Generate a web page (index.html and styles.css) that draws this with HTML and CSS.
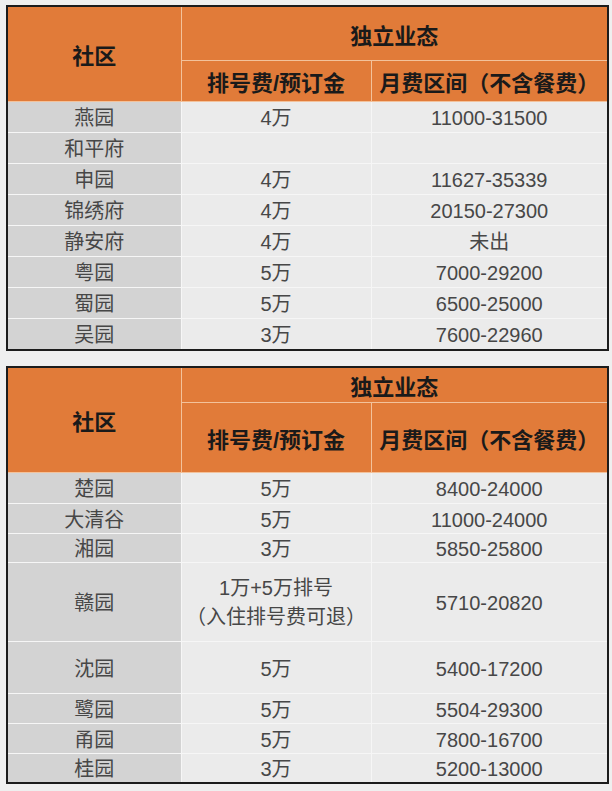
FILE: index.html
```html
<!DOCTYPE html>
<html lang="zh">
<head>
<meta charset="utf-8">
<link rel="stylesheet" href="styles.css">
</head>
<body>
<div class="page">
  <table class="tbl t1">
    <colgroup><col class="c1"><col class="c2"><col class="c3"></colgroup>
    <thead>
      <tr class="h1"><th rowspan="2" class="hname">社区</th><th colspan="2">独立业态</th></tr>
      <tr class="h2"><th>排号费/预订金</th><th>月费区间（不含餐费）</th></tr>
    </thead>
    <tbody>
      <tr class="r31"><td class="name">燕园</td><td>4万</td><td>11000-31500</td></tr>
      <tr class="r31"><td class="name">和平府</td><td></td><td></td></tr>
      <tr class="r31"><td class="name">申园</td><td>4万</td><td>11627-35339</td></tr>
      <tr class="r31"><td class="name">锦绣府</td><td>4万</td><td>20150-27300</td></tr>
      <tr class="r31"><td class="name">静安府</td><td>4万</td><td>未出</td></tr>
      <tr class="r31"><td class="name">粤园</td><td>5万</td><td>7000-29200</td></tr>
      <tr class="r31"><td class="name">蜀园</td><td>5万</td><td>6500-25000</td></tr>
      <tr class="r31"><td class="name">吴园</td><td>3万</td><td>7600-22960</td></tr>
    </tbody>
  </table>

  <table class="tbl t2">
    <colgroup><col class="c1"><col class="c2"><col class="c3"></colgroup>
    <thead>
      <tr class="h1"><th rowspan="2" class="hname">社区</th><th colspan="2">独立业态</th></tr>
      <tr class="h2"><th>排号费/预订金</th><th>月费区间（不含餐费）</th></tr>
    </thead>
    <tbody>
      <tr class="r31"><td class="name">楚园</td><td>5万</td><td>8400-24000</td></tr>
      <tr class="r30"><td class="name">大清谷</td><td>5万</td><td>11000-24000</td></tr>
      <tr class="r29"><td class="name">湘园</td><td>3万</td><td>5850-25800</td></tr>
      <tr class="r79"><td class="name">赣园</td><td class="multi">1万+5万排号<br>（入住排号费可退）</td><td>5710-20820</td></tr>
      <tr class="r52"><td class="name">沈园</td><td>5万</td><td>5400-17200</td></tr>
      <tr class="r30"><td class="name">鹭园</td><td>5万</td><td>5504-29300</td></tr>
      <tr class="r30"><td class="name">甬园</td><td>5万</td><td>7800-16700</td></tr>
      <tr class="r29"><td class="name">桂园</td><td>3万</td><td>5200-13000</td></tr>
    </tbody>
  </table>
</div>
</body>
</html>
```

FILE: styles.css
```css
html, body {
  margin: 0;
  padding: 0;
  background: #efefef;
}
.page {
  width: 612px;
  height: 791px;
  box-sizing: border-box;
  padding: 5px 0 0 6px;
  display: flex;
  flex-direction: column;
  gap: 15px;
  font-family: "Liberation Sans", "Noto Sans CJK SC", sans-serif;
}
.tbl {
  width: 603px;
  border-collapse: collapse;
  table-layout: fixed;
  border: 2px solid #1c1c1c;
}
.c1 { width: 174px; }
.c2 { width: 190px; }
.tbl th {
  background: #e17b39;
  color: #1a1a1a;
  font-weight: bold;
  font-size: 22px;
  border: 1px solid #f3c29b;
  padding: 0;
  text-align: center;
  vertical-align: middle;
}
.tbl .hname { font-size: 22px; }
.t1 .h1 th { height: 53px; }
.t1 .h2 th { height: 40px; }
.t2 .h1 th { height: 34px; }
.t2 .h2 th { height: 69px; }
.tbl td {
  background: #ebebeb;
  color: #474747;
  font-size: 20px;
  text-align: center;
  vertical-align: middle;
  padding: 2px 0 0;
  border: 1px solid #f6f6f6;
  line-height: 1.3;
}
.tbl td.name { background: #d3d3d3; }
.tbl td.multi { line-height: 29px; }
.r31 td { height: 28px; }
.r30 td { height: 27px; }
.r29 td { height: 26px; }
.r79 td { height: 76px; }
.r52 td { height: 49px; }
```
